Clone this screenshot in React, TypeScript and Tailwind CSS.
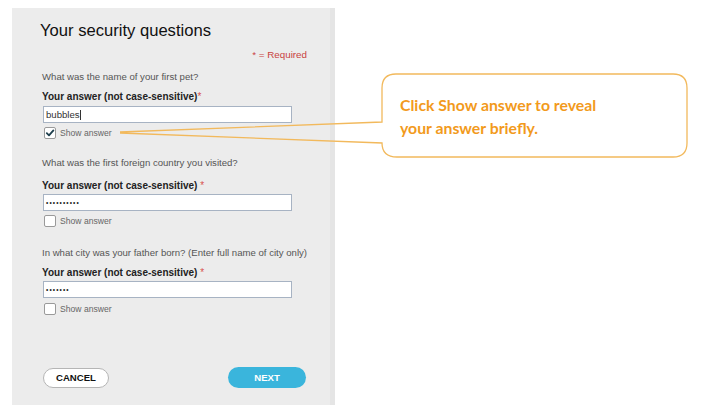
import React from "react";

function Checkbox({ checked }: { checked?: boolean }) {
  return (
    <div className="w-[12px] h-[12px] border border-[#9a9a9a] rounded-[2px] bg-white flex items-center justify-center shrink-0">
      {checked && (
        <svg width="10" height="10" viewBox="0 0 10 10">
          <polyline points="1.8,5.2 4,7.4 8.4,2.4" fill="none" stroke="#1e3f4d" strokeWidth="1.8" strokeLinecap="round" strokeLinejoin="round" />
        </svg>
      )}
    </div>
  );
}

function Label({ spaced }: { spaced?: boolean }) {
  return (
    <div className="h-[12px] leading-[12px] text-[10px] font-bold text-[#222]">
      Your answer (not case-sensitive){spaced ? " " : ""}
      <span className="text-[#d9534f] font-normal">*</span>
    </div>
  );
}

function ShowRow({ checked, mt }: { checked?: boolean; mt: string }) {
  return (
    <div className={`flex items-center h-[12px] ml-[2px] ${mt}`}>
      <Checkbox checked={checked} />
      <span className="ml-[4px] text-[8.6px] leading-[12px] text-[#666]">Show answer</span>
    </div>
  );
}

export default function App() {
  return (
    <div
      className="relative w-[701px] h-[412px] bg-white overflow-hidden"
      style={{ fontFamily: '"Liberation Sans", Arial, sans-serif' }}
    >
      <div className="ml-[12px] pt-[8px]">
        <div className="w-[323px] h-[397px] bg-[#ececec] border-r-[5px] border-[#e5e5e5] pl-[30px] pr-[23px] flex flex-col">
          <div className="mt-[13px] -ml-[2px] h-[20px] leading-[20px] text-[16.6px] text-[#111]">
            Your security questions
          </div>
          <div className="mt-[8px] h-[12px] leading-[12px] text-[9.8px] text-[#c9423f] text-right">
            * = Required
          </div>

          <div className="mt-[10px] h-[12px] leading-[12px] text-[9.6px] text-[#555]">
            What was the name of your first pet?
          </div>
          <div className="mt-[8px]">
            <Label />
          </div>
          <div className="mt-[3px] ml-[1px] w-[249px] h-[17px] bg-white border border-[#a7b3c3] flex items-center pl-[2px]">
            <span className="text-[9.6px] text-[#333] leading-[12px]">bubbles</span>
            <span className="w-[1px] h-[10px] bg-[#333] ml-[0.5px]" />
          </div>
          <ShowRow checked mt="mt-[4px]" />

          <div className="mt-[18px] h-[12px] leading-[12px] text-[9.6px] text-[#555]">
            What was the first foreign country you visited?
          </div>
          <div className="mt-[11px]">
            <Label spaced />
          </div>
          <div className="mt-[2px] ml-[1px] w-[249px] h-[17px] bg-white border border-[#a7b3c3] flex items-center pl-[2px]">
            <span className="text-[6.5px] text-[#222] tracking-[1.1px] leading-[10px]">••••••••••</span>
          </div>
          <ShowRow mt="mt-[4px]" />

          <div className="mt-[20px] h-[12px] leading-[12px] text-[9.6px] text-[#555] whitespace-nowrap">
            In what city was your father born? (Enter full name of city only)
          </div>
          <div className="mt-[8px]">
            <Label spaced />
          </div>
          <div className="mt-[2px] ml-[1px] w-[249px] h-[17px] bg-white border border-[#a7b3c3] flex items-center pl-[2px]">
            <span className="text-[6.5px] text-[#222] tracking-[1.1px] leading-[10px]">•••••••</span>
          </div>
          <ShowRow mt="mt-[5px]" />

          <div className="mt-[52px] ml-[1px] w-[263px] flex justify-between items-center">
            <button className="w-[66px] h-[20px] rounded-full bg-white border-[1.5px] border-[#b5b5b5] text-[9.6px] font-bold text-[#111] leading-none">
              CANCEL
            </button>
            <button className="w-[78px] h-[21px] rounded-full bg-[#3ab5dc] text-[9.6px] font-bold text-white leading-none">
              NEXT
            </button>
          </div>
        </div>
      </div>

      <svg className="absolute left-0 top-0 pointer-events-none" width="701" height="412" viewBox="0 0 701 412">
        <path
          d="M120,132 L382,122 L382,88 Q382,74 396,74 L673,74 Q687,74 687,88 L687,143 Q687,157 673,157 L397,157 Q382,157 382,143 L120,133"
          fill="none"
          stroke="#f2b95c"
          strokeWidth="1.3"
        />
      </svg>
      <div
        className="absolute left-[400px] top-[93px] text-[15.8px] leading-[23px] font-bold text-[#f29a1c]"
        style={{ fontFamily: 'Lato, "Noto Sans", sans-serif' }}
      >
        <div>Click Show answer to reveal</div>
        <div>your answer briefly.</div>
      </div>
    </div>
  );
}
